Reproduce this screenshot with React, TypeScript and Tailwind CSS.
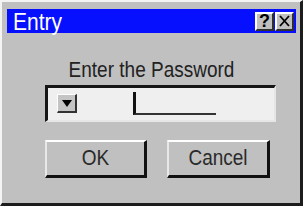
const font = { fontFamily: '"Liberation Sans", Arial, sans-serif' };

function TitleButton({ children }: { children: React.ReactNode }) {
  return (
    <div className="flex h-[19px] w-[19px] items-center justify-center border-t-2 border-l-2 border-t-white border-l-white border-r-2 border-b-2 border-r-[#303030] border-b-[#303030] bg-[#c0c0c0] text-[18px] leading-none font-bold text-black">
      {children}
    </div>
  );
}

function DialogButton({ label, width }: { label: string; width: string }) {
  return (
    <button
      className={`${width} flex h-[38px] items-center justify-center border-t-2 border-l-2 border-t-white border-l-[#e8e8e8] border-r-[3px] border-b-[3px] border-r-[#111] border-b-[#111] bg-[#c0c0c0] text-[19px] text-[#2a2a2a]`}
    >
      <span className="inline-block scale-y-[1.15]">{label}</span>
    </button>
  );
}

export default function App() {
  return (
    <div
      className="flex h-[206px] w-[303px] flex-col border-t-2 border-l-2 border-t-[#f4f4f4] border-l-[#f4f4f4] border-r-[3px] border-b-[3px] border-r-[#1c1c1c] border-b-[#1c1c1c] bg-[#c0c0c0] pt-[7px] pr-[4px] pl-[5px]"
      style={font}
    >
      {/* title bar */}
      <div className="flex h-[24px] items-center justify-between bg-[#0610ff] pr-[2px] pl-[6px]">
        <span className="inline-block scale-y-[1.12] text-[21px] leading-none text-white">Entry</span>
        <div className="flex gap-[1px]">
          <TitleButton>?</TitleButton>
          <TitleButton>
            <svg width="11" height="12" viewBox="0 0 11 12">
              <path d="M1 1 L10 11 M10 1 L1 11" stroke="#000" strokeWidth="1.8" />
            </svg>
          </TitleButton>
        </div>
      </div>

      <p className="mt-[26px] text-center text-[19px] leading-[22px] text-[#222]">
        <span className="inline-block scale-y-[1.15]">Enter the Password</span>
      </p>

      {/* password field */}
      <div className="mt-[4px] ml-[38px] flex h-[37px] w-[231px] items-start border-t-[3px] border-l-[3px] border-t-[#151515] border-l-[#151515] border-r-2 border-b-2 border-r-[#e6e6e6] border-b-[#e6e6e6] bg-[#efefef] pl-[9px]">
        <div className="mt-[6px] flex h-[19px] w-[20px] items-center justify-center border-t border-l border-t-white border-l-white border-r-2 border-b-2 border-r-[#333] border-b-[#333] bg-[#c4c4c4]">
          <svg width="10" height="7" viewBox="0 0 10 7">
            <path d="M0 0 L10 0 L5 7 Z" fill="#000" />
          </svg>
        </div>
        <div className="mt-[4px] ml-[56px] h-[23px] w-[83px] border-l-[3px] border-b-2 border-l-[#111] border-b-[#333]" />
      </div>

      {/* actions */}
      <div className="mt-[18px] ml-[38px] flex gap-[20px]">
        <DialogButton label="OK" width="w-[102px]" />
        <DialogButton label="Cancel" width="w-[103px]" />
      </div>
    </div>
  );
}
